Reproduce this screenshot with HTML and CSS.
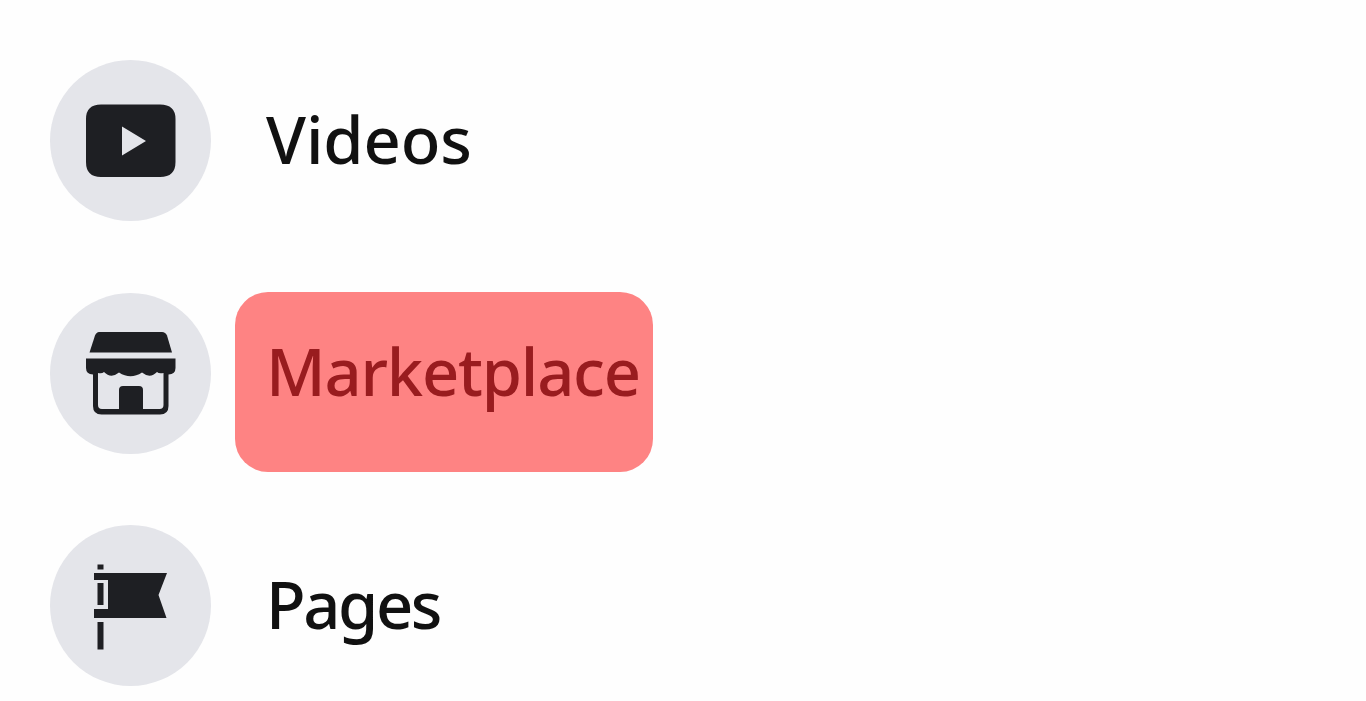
FILE: index.html
```html
<!DOCTYPE html>
<html lang="en">
<head>
    <meta charset="UTF-8">
    <meta name="viewport" content="width=device-width, initial-scale=1.0">
    <title>Menu</title>
    <link rel="stylesheet" href="styles.css">
</head>
<body>

<ul class="menu">
    <!-- Videos -->
    <li class="menu-item">
        <span class="icon">
            <svg viewBox="0 0 161 161">
                <path fill-rule="evenodd" d="M51 44.500H110Q125.500 44.500 125.500 59V102Q125.500 117 110 117H51Q36 117 36 102V59Q36 44.500 51 44.500ZM72 66.500V95.500L96 81Z"/>
            </svg>
        </span>
        <span class="label videos">Videos</span>
    </li>

    <!-- Marketplace -->
    <li class="menu-item">
        <span class="icon">
            <svg viewBox="0 0 161 161">
                <path d="M49 39H112Q115.500 39 117 42.500L122 59.500H39.500L45 42.500Q46.500 39 49 39Z"/>
                <path d="M36 65.500H125.500V75Q125.500 81 118.500 81.500V113Q118.500 121.500 110 121.500H51.500Q43 121.500 43 113V81.500Q36 81 36 75Z"/>
                <path class="cut" d="M48 80Q52 81 54 79Q61 86 69 79.500Q80.500 87 92 79.500Q100 86 107 79Q109 81 113.500 80V112Q113.500 116 109.500 116H93V97Q93 93 89 93H73Q69 93 69 97V116H52Q48 116 48 112Z"/>
            </svg>
        </span>
        <span class="label marketplace">Marketplace</span>
        <span class="highlight"></span>
    </li>

    <!-- Pages -->
    <li class="menu-item">
        <span class="icon">
            <svg viewBox="0 0 161 161">
                <path d="M47.500 39.500H53.500V44.500H47.500ZM44 48H117L108.500 70L116.500 93H44V84H58V55H44ZM47.500 58H53.500V80H47.500ZM47.500 97H53.500V124.500H47.500Z"/>
            </svg>
        </span>
        <span class="label pages">Pages</span>
    </li>
</ul>

</body>
</html>
```

FILE: styles.css
```css
/* General Styles */
body {
    font-family: "Noto Sans", "Open Sans", sans-serif;
    margin: 0;
    padding: 0;
    background-color: #fefefe;
    overflow: hidden;
}
.menu {
    list-style: none;
    margin: 0;
    padding: 60px 0 0 50px;
    display: flex;
    flex-direction: column;
    gap: 71.5px;
}
.menu-item {
    display: flex;
    align-items: center;
    gap: 55px;
    height: 161px;
    position: relative;
}
.icon {
    width: 161px;
    height: 161px;
    flex: none;
    border-radius: 50%;
    background-color: #e4e5ea;
}
.icon svg {
    display: block;
    width: 161px;
    height: 161px;
    fill: #1e1f23;
}
.icon .cut {
    fill: #e4e5ea;
}
.label {
    font-size: 65px;
    font-weight: 500;
    line-height: 90px;
    padding-bottom: 4px;
    color: #111;
}
.videos {
    letter-spacing: -0.1px;
}
.marketplace {
    color: #38343a;
    letter-spacing: -1.2px;
}
.pages {
    letter-spacing: -2.4px;
}

/* Translucent box over the label */
.highlight {
    position: absolute;
    left: 185px;
    top: -1px;
    width: 418px;
    height: 180px;
    border-radius: 33px;
    background-color: rgba(255, 5, 5, 0.49);
}
```
